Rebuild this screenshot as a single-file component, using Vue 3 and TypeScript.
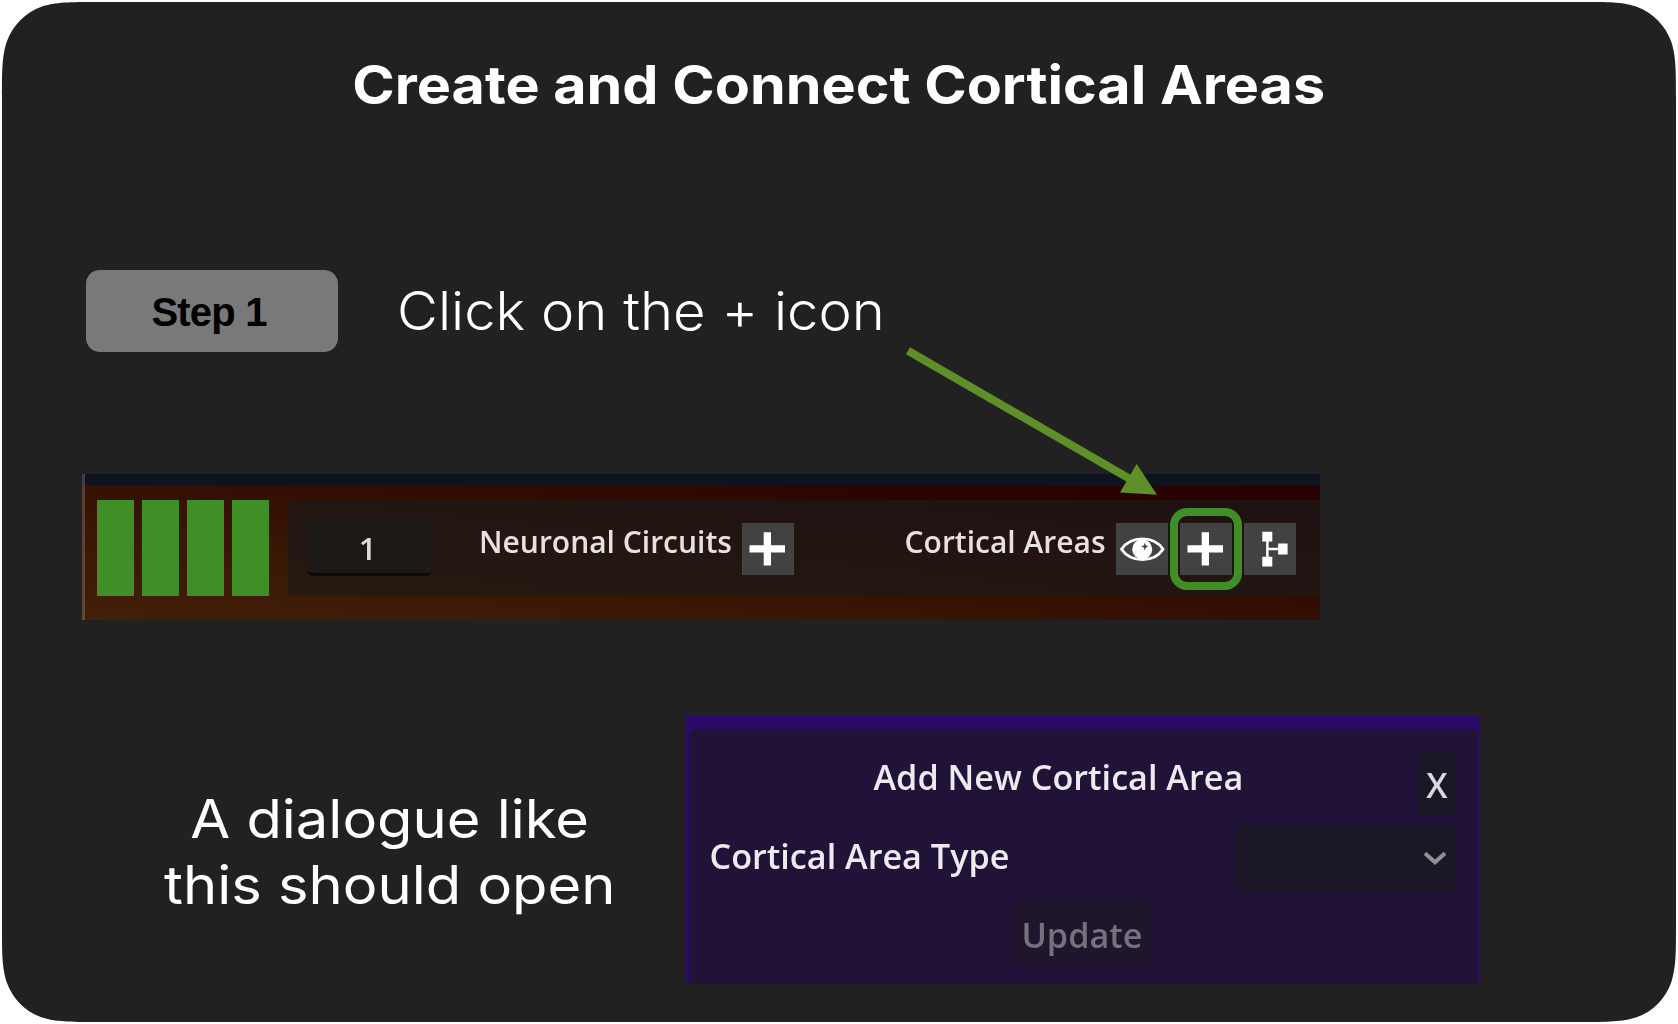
<script setup lang="ts">
const activityBars: number[] = [1, 2, 3, 4]
const captionLines: string[] = ['A dialogue like', 'this should open']
</script>

<template>
  <main class="slide">
    <svg class="backdrop" viewBox="0 0 1678 1024" aria-hidden="true">
      <path
        fill="#212121"
        d="M97 2H1581C1608.500 2 1622 2 1634.500 6.100L1636.700 6.700C1653 12.600 1665.500 25.500 1671.300 41.800C1676 56.700 1676 70.600 1676 98V926C1676 953.400 1676 967.300 1671.300 982.200C1665.500 998.500 1653 1011.400 1636.700 1017.300C1622 1022 1608.500 1022 1581 1022H97C69.500 1022 56 1022 41.300 1017.300C25 1011.400 12.600 998.500 6.700 982.200C2 967.300 2 953.400 2 926V98C2 70.600 2 56.700 6.700 41.800C12.600 25.500 25 12.600 41.300 6.700C56 2 69.500 2 97 2Z"
      />
    </svg>

    <h1 class="title"><span>Create and Connect Cortical Areas</span></h1>

    <section class="step">
      <div class="badge"><span>Step 1</span></div>
      <p class="instruction">Click on the + icon</p>
    </section>

    <section class="toolbar">
      <div class="bars">
        <i v-for="bar in activityBars" :key="bar"></i>
      </div>
      <div class="panel">
        <div class="counter"><span>1</span></div>
        <span class="label circuits">Neuronal Circuits</span>
        <button class="tool first" aria-label="Add circuit">
          <svg viewBox="0 0 52 52"><path d="M7.500 22.300h14.200v-13h7.300v13h14v7.200h-14v13h-7.300v-13h-14.200z" /></svg>
        </button>
        <span class="label areas">Cortical Areas</span>
        <button class="tool" aria-label="View areas">
          <svg viewBox="0 0 52 52">
            <path fill="none" stroke="#fff" stroke-width="2.800" d="M5.500 26.200C15 12.500 38 12.500 47 26.200C38 40 15 40 5.500 26.200Z" />
            <circle cx="26.200" cy="26.200" r="10" />
            <path fill="#424242" d="M28.800 19.600l1 2.900 2.600 1-2.600 1-1 3-1-3-2.600-1 2.600-1z" />
          </svg>
        </button>
        <button class="tool marked" aria-label="Add area">
          <svg viewBox="0 0 52 52"><path d="M7.500 22.300h14.200v-13h7.300v13h14v7.200h-14v13h-7.300v-13h-14.200z" /></svg>
        </button>
        <button class="tool" aria-label="Area hierarchy">
          <svg viewBox="0 0 52 52">
            <path fill-rule="evenodd" d="M18.300 8.700h10v9.800h-3.700v6.200h9.500v-4.200h9.500v11h-9.500v-4.200h-9.500v6.400h3.700v9.800h-10v-9.800h3.800v-15.200h-3.800z" />
          </svg>
        </button>
      </div>
    </section>

    <section class="result">
      <p class="caption">
        <span v-for="line in captionLines" :key="line">{{ line }}</span>
      </p>
      <div class="dialog">
        <div class="dialog-body">
          <header class="dialog-head">
            <h2>Add New Cortical Area</h2>
            <button class="close"><span>X</span></button>
          </header>
          <div class="field">
            <label>Cortical Area Type</label>
            <div class="select">
              <svg viewBox="0 0 24 16"><path d="M2 3.200L12 12.300L22 3.200" /></svg>
            </div>
          </div>
          <button class="update"><span>Update</span></button>
        </div>
      </div>
    </section>

    <svg class="pointer" viewBox="0 0 1678 1024" aria-hidden="true">
      <path d="M908 350.700L1130 479" stroke="#5f8f28" stroke-width="8" />
      <path d="M1136.700 464L1157 494.800L1120 492.600Z" fill="#5f8f28" />
    </svg>
  </main>
</template>

<style>
body {
  margin: 0;
  background: #fff;
}
</style>

<style scoped>
.slide {
  position: relative;
  z-index: 0;
  box-sizing: border-box;
  width: 1678px;
  height: 1024px;
  padding-top: 52px;
  overflow: hidden;
  color: #fff;
  font-family: Inter, sans-serif;
}
.backdrop,
.pointer {
  position: absolute;
  inset: 0;
  width: 1678px;
  height: 1024px;
  pointer-events: none;
}
.backdrop {
  z-index: -1;
}
.title {
  margin: 0;
  height: 66px;
  line-height: 66px;
  font-size: 53px;
  font-weight: 700;
  text-align: center;
  white-space: nowrap;
}
.title span {
  display: inline-block;
  transform: scaleX(1.084);
}
.step {
  display: flex;
  height: 82px;
  margin: 152px 0 0 86px;
}
.badge {
  width: 252px;
  border-radius: 14px;
  background: #797979;
  color: #000;
  font: 700 40px/84px 'Liberation Sans', sans-serif;
  letter-spacing: -0.8px;
  text-align: center;
}
.badge span {
  margin-right: 6px;
}
.instruction {
  margin: 0 0 0 59px;
  font-size: 53px;
  font-weight: 300;
  line-height: 82px;
  white-space: nowrap;
  transform: scaleX(1.06);
  transform-origin: 0 50%;
}
.toolbar {
  display: flex;
  box-sizing: border-box;
  width: 1238px;
  height: 146px;
  margin: 122px 0 0 82px;
  padding: 26px 0 24px 12px;
  border-left: 3px solid rgba(160, 160, 160, 0.32);
  background:
    linear-gradient(#0e131f, #0e131f) 0 0 / 100% 11.500px no-repeat border-box,
    linear-gradient(7deg, #421f07 0%, #3b1805 28%, #330e03 52%, #280300 85%, #250000 100%) border-box;
}
.bars {
  display: flex;
  gap: 7.500px;
}
.bars i {
  width: 37.400px;
  height: 96px;
  background: #3f8e26;
}
.panel {
  display: flex;
  flex: 1;
  align-items: flex-start;
  margin-left: 19px;
  height: 95.500px;
  border-radius: 5px 0 0 5px;
  background: linear-gradient(7deg, #271a11, #231511 45%, #1f1111);
  font-family: 'Open Sans', sans-serif;
}
.counter {
  box-sizing: border-box;
  flex: none;
  width: 125px;
  height: 57px;
  margin: 19px 0 0 19px;
  border-bottom: 3px solid #0f0a08;
  border-radius: 6px;
  background: #1d1916;
  color: #dedcdb;
  font-size: 31px;
  font-weight: 600;
  line-height: 58px;
  text-align: center;
}
.counter span {
  display: block;
  margin-right: 4px;
}
.label {
  flex: none;
  color: #e7e2e1;
  font-size: 30px;
  font-weight: 600;
  line-height: 42px;
  white-space: nowrap;
  margin-top: 21px;
}
.counter span,
.label,
.dialog h2,
.dialog label,
.dialog span {
  filter: blur(0.5px);
}
.circuits {
  width: 262.500px;
  margin-left: 47px;
}
.areas {
  width: 211.500px;
  margin-left: 111px;
}
.tool {
  position: relative;
  flex: none;
  width: 52px;
  height: 52px;
  margin: 23px 12px 0 0;
  padding: 0;
  border: 0;
  background: #424242;
}
.tool.first {
  margin-right: 0;
}
.tool svg {
  display: block;
  width: 52px;
  height: 52px;
  fill: #fff;
  filter: blur(0.5px);
}
.marked::after {
  content: '';
  position: absolute;
  box-sizing: border-box;
  inset: -15px -10px;
  border: 8px solid #3f8e26;
  border-radius: 17px;
}
.result {
  display: flex;
  margin: 96px 0 0 90px;
}
.caption {
  display: flex;
  flex-direction: column;
  align-items: center;
  box-sizing: border-box;
  width: 596px;
  margin: 70px 0 0;
  padding-left: 3px;
  font-size: 53px;
  font-weight: 400;
  line-height: 66px;
  white-space: nowrap;
}
.caption span {
  transform: scaleX(1.092);
}
.dialog {
  box-sizing: border-box;
  width: 794px;
  height: 268px;
  padding: 13px 2.500px 0;
  background: #2c0a68;
  font-family: 'Open Sans', sans-serif;
}
.dialog-body {
  display: flex;
  flex-direction: column;
  box-sizing: border-box;
  height: 255px;
  padding: 22px 21.500px 0 21px;
  border-radius: 5px 5px 0 0;
  background: #201337;
}
.dialog-head {
  display: flex;
  height: 65px;
}
.dialog h2,
.dialog label {
  margin: 0;
  color: #edeaf0;
  font-size: 34.200px;
  font-weight: 600;
  white-space: nowrap;
}
.dialog h2 {
  flex: 1;
  line-height: 51px;
  padding-left: 164px;
}
.dialog button {
  padding: 0;
  border: 0;
  border-radius: 6px;
  background: #1c1726;
  font-family: inherit;
  font-size: 34.200px;
  font-weight: 600;
}
.dialog .close {
  width: 38px;
  height: 65px;
  color: #d9d8db;
  line-height: 67px;
}
.dialog span {
  display: block;
}
.field {
  display: flex;
  justify-content: space-between;
  height: 66px;
  margin-top: 9px;
}
.dialog label {
  line-height: 61px;
}
.select {
  display: flex;
  justify-content: flex-end;
  width: 220px;
  height: 66px;
  border-radius: 6px;
  background: #1c1726;
}
.select svg {
  width: 24px;
  height: 16px;
  margin: 25px 9px 0 0;
  fill: none;
  stroke: #918f94;
  stroke-width: 4;
}
.dialog .update {
  width: 138px;
  height: 66px;
  margin: 9px 0 0 303.500px;
  background: #1f162d;
  color: #77717e;
  line-height: 69px;
}
</style>
